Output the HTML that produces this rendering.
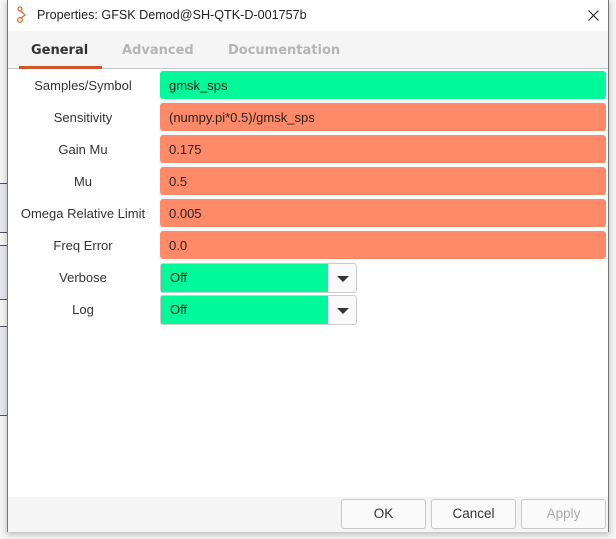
<!DOCTYPE html>
<html><head><style>
*{margin:0;padding:0;box-sizing:border-box}
body{width:616px;height:539px;background:#f4f4f4;position:relative;overflow:hidden;font-family:"Liberation Sans","DejaVu Sans",sans-serif;font-size:13px;color:#333}
.blk{position:absolute;left:0;width:8px;background:#e6e6f0;border-top:1px solid #555;border-bottom:1px solid #555;font-size:9px;font-weight:bold;color:#000}
#dlg{position:absolute;left:7px;top:0;width:602px;height:532px;background:#fff;border:1px solid #777;border-top:none;box-shadow:0 2px 6px rgba(0,0,0,.25)}
.title{position:absolute;left:29px;top:8px;font-size:12.6px;color:#222}
.tabs{position:absolute;left:0;top:31px;width:600px;height:38px;background:#f5f5f5;border-bottom:1px solid #c8c8c8}
.tab{position:absolute;top:12px;font-weight:bold;font-size:13px;color:#b5b5b5;font-family:"DejaVu Sans",sans-serif}
.lab{position:absolute;width:150px;left:0;text-align:center;font-size:13px;color:#333}
.f{position:absolute;left:152px;width:446px;height:28px;border-radius:3px;padding:7px 9px;font-size:13px;color:#222}
.g{background:#00fa9a}.o{background:#fe8a69}
.cb{position:absolute;left:152px;width:197px;height:30px;border:1px solid #ccc;border-radius:3px;background:#fafafa}
.cb .v{position:absolute;left:0;top:0;width:167px;height:28px;background:#00fa9a;padding:6px 9px;color:#222}
.cb .a{position:absolute;left:176px;top:12px;border-left:6px solid transparent;border-right:6px solid transparent;border-top:6px solid #333}
.bot{position:absolute;left:0;top:497px;width:600px;height:35px;background:#f5f5f5}
.btn{position:absolute;top:2px;width:85px;height:30px;border:1px solid #c8c8c8;border-radius:3px;background:#fafafa;text-align:center;line-height:28px;font-size:13.5px;color:#333}
</style></head><body>
<div class="blk" style="top:183px;height:50px"></div>
<div class="blk" style="top:245px;height:55px"></div>
<div class="blk" style="top:326px;height:90px"></div>
<div id="dlg">
<svg style="position:absolute;left:8px;top:6px" width="12" height="18"><circle cx="4" cy="3" r="2" fill="none" stroke="#e07030" stroke-width="1.3"/><circle cx="4" cy="14" r="2.3" fill="none" stroke="#e07030" stroke-width="1.3"/><path d="M5 5 L9 9 L5 12" fill="none" stroke="#e07030" stroke-width="1.3"/></svg>
<div class="title">Properties: GFSK Demod@SH-QTK-D-001757b</div>
<svg style="position:absolute;left:580px;top:10px" width="11" height="11"><path d="M0.5 0.5L10.5 10.5M10.5 0.5L0.5 10.5" stroke="#222" stroke-width="1.1"/></svg>
<div class="tabs">
<div class="tab" style="left:23px;color:#333">General</div>
<div style="position:absolute;left:11px;top:35px;width:83px;height:3px;background:#d0552a"></div>
<div class="tab" style="left:114px">Advanced</div>
<div class="tab" style="left:220px">Documentation</div>
</div>
<div class="lab" style="top:78px">Samples/Symbol</div><div class="f g" style="top:71px">gmsk_sps</div>
<div class="lab" style="top:110px">Sensitivity</div><div class="f o" style="top:103px">(numpy.pi*0.5)/gmsk_sps</div>
<div class="lab" style="top:142px">Gain Mu</div><div class="f o" style="top:135px">0.175</div>
<div class="lab" style="top:174px">Mu</div><div class="f o" style="top:167px">0.5</div>
<div class="lab" style="top:206px">Omega Relative Limit</div><div class="f o" style="top:199px">0.005</div>
<div class="lab" style="top:238px">Freq Error</div><div class="f o" style="top:231px">0.0</div>
<div class="lab" style="top:270px">Verbose</div><div class="cb" style="top:263px"><div class="v">Off</div><div class="a"></div></div>
<div class="lab" style="top:302px">Log</div><div class="cb" style="top:295px"><div class="v">Off</div><div class="a"></div></div>
<div class="bot">
<div class="btn" style="left:333px">OK</div>
<div class="btn" style="left:423px">Cancel</div>
<div class="btn" style="left:513px;color:#aaa">Apply</div>
</div>
</div>
</body></html>
